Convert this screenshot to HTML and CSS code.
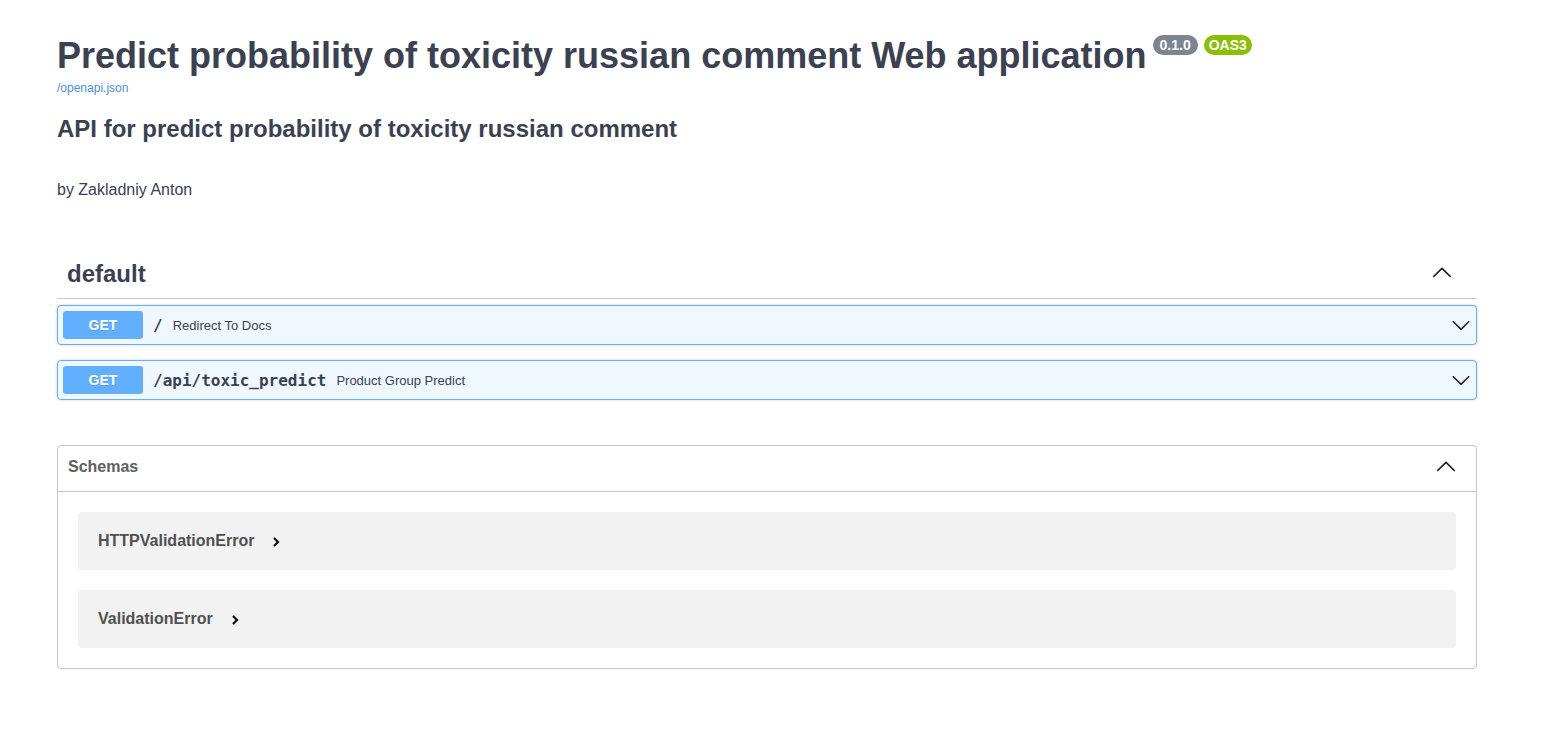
FILE: index.html
```html
<!DOCTYPE html>
<html lang="en">
<head>
<meta charset="utf-8">
<title>Predict probability of toxicity russian comment Web application - Swagger UI</title>
<link rel="stylesheet" href="styles.css">
</head>
<body>
<div class="wrapper">
  <div class="info">
    <h2 class="title">Predict probability of toxicity russian comment Web application<span class="badges"><small class="badge version">0.1.0</small><small class="badge oas">OAS3</small></span></h2>
    <a class="url" href="#">/openapi.json</a>
    <h2 class="desc">API for predict probability of toxicity russian comment</h2>
    <p class="author">by Zakladniy Anton</p>
  </div>

  <div class="tag-section">
    <h3 class="tag-head">
      <span class="tag-name">default</span>
      <svg class="arrow tag-arrow" viewBox="0 0 20 20" width="24" height="24"><path d="M 17.418 14.908 C 17.69 15.176 17.69 15.609 17.418 15.875 C 17.148 16.141 16.707 16.141 16.438 15.875 L 10 9.597 L 3.561 15.875 C 3.29 16.141 2.85 16.141 2.58 15.875 C 2.308 15.609 2.308 15.176 2.58 14.908 L 9.51 8.125 C 9.78 7.859 10.22 7.859 10.49 8.125 L 17.418 14.908 Z"/></svg>
    </h3>
    <div class="opblock">
      <span class="method">GET</span>
      <span class="path">/</span>
      <span class="summary">Redirect To Docs</span>
      <svg class="arrow op-arrow" viewBox="0 0 20 20" width="20" height="20"><path d="M17.418 6.109c.272-.268.709-.268.979 0s.271.701 0 .969l-7.908 7.83c-.27.268-.707.268-.979 0l-7.908-7.830c-.27-.268-.27-.701 0-.969.271-.268.709-.268.979 0L10 13.25l7.418-7.141z"/></svg>
    </div>
    <div class="opblock">
      <span class="method">GET</span>
      <span class="path">/api/toxic_predict</span>
      <span class="summary">Product Group Predict</span>
      <svg class="arrow op-arrow" viewBox="0 0 20 20" width="20" height="20"><path d="M17.418 6.109c.272-.268.709-.268.979 0s.271.701 0 .969l-7.908 7.83c-.27.268-.707.268-.979 0l-7.908-7.830c-.27-.268-.27-.701 0-.969.271-.268.709-.268.979 0L10 13.25l7.418-7.141z"/></svg>
    </div>
  </div>

  <section class="models">
    <h4 class="models-head">
      <span>Schemas</span>
      <svg class="arrow models-arrow" viewBox="0 0 20 20" width="24" height="24"><path d="M 17.418 14.908 C 17.69 15.176 17.69 15.609 17.418 15.875 C 17.148 16.141 16.707 16.141 16.438 15.875 L 10 9.597 L 3.561 15.875 C 3.29 16.141 2.85 16.141 2.58 15.875 C 2.308 15.609 2.308 15.176 2.58 14.908 L 9.51 8.125 C 9.78 7.859 10.22 7.859 10.49 8.125 L 17.418 14.908 Z"/></svg>
    </h4>
    <div class="model-list">
      <div class="model">
        <span class="model-title">HTTPValidationError</span>
        <svg class="model-toggle" viewBox="0 0 10 12" width="10" height="12"><polyline points="3,2 7,6 3,10" fill="none" stroke="#111" stroke-width="2.2"/></svg>
      </div>
      <div class="model">
        <span class="model-title">ValidationError</span>
        <svg class="model-toggle" viewBox="0 0 10 12" width="10" height="12"><polyline points="3,2 7,6 3,10" fill="none" stroke="#111" stroke-width="2.2"/></svg>
      </div>
    </div>
  </section>
</div>
</body>
</html>
```

FILE: styles.css
```css
html, body {
  margin: 0;
  padding: 0;
  background: #fff;
}

body {
  font-family: "Liberation Sans", Arial, sans-serif;
  color: #3b4151;
}

.wrapper {
  width: 1420px;
  margin: 0 0 0 57px;
  padding-bottom: 60px;
}

.info {
  padding-top: 35px;
}

.title {
  font-size: 36px;
  font-weight: 700;
  margin: 0;
  line-height: 41px;
  color: #3b4151;
}

.badges {
  display: inline-block;
  vertical-align: top;
  margin-left: 6px;
  margin-top: 0;
}

.badge {
  display: inline-block;
  font-size: 14px;
  line-height: 16px;
  font-weight: 700;
  color: #fff;
  border-radius: 57px;
  padding: 2px 7px;
  margin-right: 6px;
  vertical-align: top;
}

.version {
  background: #7d8492;
}

.oas {
  background: #89bf04;
  padding: 2px 5px;
}

.url {
  display: block;
  font-size: 12px;
  line-height: 14px;
  color: #4990e2;
  text-decoration: none;
  margin-top: 5px;
}

.desc {
  font-size: 24px;
  font-weight: 700;
  margin: 20px 0 0;
  line-height: 28px;
}

.author {
  font-size: 16px;
  line-height: 18px;
  margin: 38px 0 0;
}

.tag-section {
  margin-top: 51px;
}

.tag-head {
  display: flex;
  align-items: center;
  margin: 0 0 6px;
  padding: 10px 23px 10px 10px;
  border-bottom: 1px solid #c4c6cb;
  font-size: 24px;
  font-weight: 700;
  line-height: 28px;
}

.tag-name {
  flex: 1;
}

.arrow {
  fill: #1b1b1b;
  flex: none;
}

.tag-arrow {
  margin: -4px 0 4px;
}

.opblock {
  display: flex;
  align-items: center;
  padding: 5px;
  margin: 0 0 15px;
  border: 1px solid #61affe;
  border-radius: 4px;
  background: #eff7ff;
  box-shadow: 0 0 3px rgba(0, 0, 0, 0.19);
}

.method {
  width: 80px;
  padding: 6px 0;
  font-size: 14px;
  line-height: 16px;
  font-weight: 700;
  text-align: center;
  color: #fff;
  background: #61affe;
  border-radius: 3px;
  text-shadow: 0 1px 0 rgba(0, 0, 0, 0.1);
}

.path {
  font-family: "DejaVu Sans Mono", monospace;
  font-size: 16px;
  font-weight: 700;
  padding: 0 10px;
  color: #3b4151;
}

.summary {
  flex: 1;
  font-size: 13px;
  color: #3b4151;
}

.op-arrow {
  margin-right: 0;
}

.models {
  margin-top: 45px;
  border: 1px solid #c4c6cb;
  border-radius: 4px;
}

.models-head {
  display: flex;
  align-items: center;
  margin: 0;
  padding: 8px 18px 12px 10px;
  min-height: 25px;
  border-bottom: 1px solid #c4c6cb;
  font-size: 16px;
  font-weight: 700;
  color: #606060;
}

.models-head span {
  flex: 1;
}

.models-arrow {
  margin: -3px 0 3px;
}

.model-list {
  display: flex;
  flex-direction: column;
  gap: 20px;
  padding: 20px 20px 20px;
}

.model {
  display: flex;
  align-items: center;
  height: 58px;
  padding: 0 20px;
  background: #f2f2f2;
  border-radius: 4px;
}

.model-title {
  font-size: 16px;
  font-weight: 700;
  color: #505050;
}

.model-toggle {
  margin-left: 17px;
  margin-top: 2px;
}
```
